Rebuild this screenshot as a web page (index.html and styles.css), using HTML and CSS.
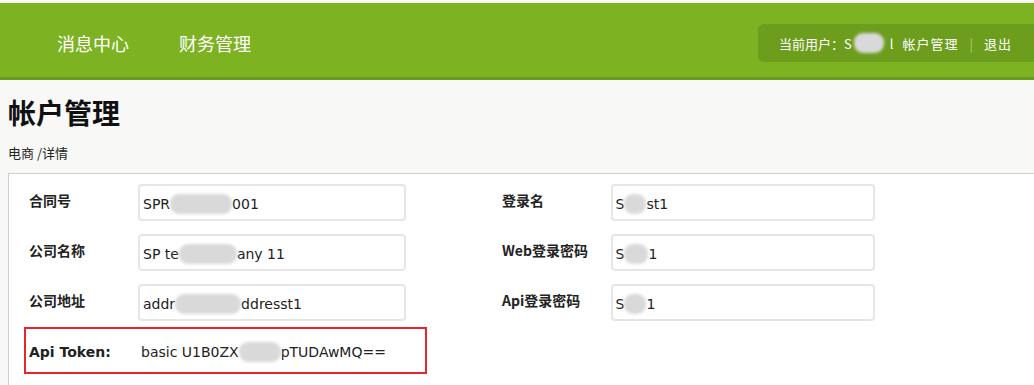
FILE: index.html
```html
<!DOCTYPE html>
<html lang="zh-CN">
<head>
<meta charset="utf-8">
<title>帐户管理</title>
<link rel="stylesheet" href="styles.css">
</head>
<body>
<header class="topbar">
  <nav class="nav">
    <a class="nav-item">消息中心</a>
    <a class="nav-item">财务管理</a>
  </nav>
  <div class="userbox">
    <span>当前用户：S</span><span class="blob blob-user"></span><span class="uname-end">l</span>
    <a class="ulink">帐户管理</a>
    <span class="sep">|</span>
    <a class="ulink">退出</a>
  </div>
</header>

<main class="main">
  <h1 class="title">帐户管理</h1>
  <div class="crumb">电商 /详情</div>

  <section class="panel">
    <div class="grid">
      <div class="field">
        <label class="label">合同号</label>
        <div class="input">SPR<span class="blob" style="width:62px"></span>001</div>
      </div>
      <div class="field">
        <label class="label">登录名</label>
        <div class="input">S<span class="blob" style="width:22px"></span>st1</div>
      </div>
      <div class="field">
        <label class="label">公司名称</label>
        <div class="input">SP te<span class="blob" style="width:58px"></span>any 11</div>
      </div>
      <div class="field">
        <label class="label">Web登录密码</label>
        <div class="input">S<span class="blob" style="width:24px"></span>1</div>
      </div>
      <div class="field">
        <label class="label">公司地址</label>
        <div class="input">addr<span class="blob" style="width:66px"></span>ddresst1</div>
      </div>
      <div class="field">
        <label class="label">Api登录密码</label>
        <div class="input">S<span class="blob" style="width:22px"></span>1</div>
      </div>
    </div>

    <div class="token">
      <span class="token-label">Api Token:</span>
      <span class="token-value">basic U1B0ZX<span class="blob" style="width:42px"></span>pTUDAwMQ==</span>
    </div>
  </section>
</main>
</body>
</html>
```

FILE: styles.css
```css
* { box-sizing: border-box; }

html, body {
  margin: 0;
  padding: 0;
}

body {
  background: #f8f8f6;
  font-family: "Noto Sans CJK SC", "DejaVu Sans", sans-serif;
  color: #222;
  overflow: hidden;
  padding-top: 3px;
}

.topbar {
  display: flex;
  align-items: flex-start;
  height: 77px;
  background: #7db322;
  border-bottom: 3px solid #6a9a1c;
}

.nav {
  display: flex;
  gap: 50px;
  padding-left: 57px;
  padding-top: 27px;
}

.nav-item {
  color: #fff;
  font-size: 18px;
  line-height: 26px;
}

.userbox {
  margin-left: auto;
  margin-top: 21px;
  height: 38px;
  width: 276px;
  display: flex;
  align-items: center;
  padding-left: 21px;
  background: #6d9d1c;
  border-radius: 6px 0 0 6px;
  color: #fff;
  font-size: 13px;
  white-space: nowrap;
}

.blob-user {
  width: 30px;
  height: 22px;
  background: #98c34e;
  margin-left: 2px;
}

.uname-end { margin-left: 6px; margin-right: 9px; }
.ulink { color: #fff; letter-spacing: 1px; }
.sep { color: #a9cf6a; margin: 0 11px; }

.main {
  padding: 0 0 0 8px;
  margin-right: -30px;
}

.title {
  margin: 12px 0 0;
  font-size: 28px;
  line-height: 40px;
  font-weight: 700;
  color: #111;
}

.crumb {
  margin-top: 11px;
  font-size: 13px;
  line-height: 20px;
  color: #222;
}

.panel {
  margin-top: 10px;
  background: #fff;
  border: 1px solid #cfcfcf;
  border-bottom: none;
  height: 212px;
  padding: 10px 0 0 15px;
}

.grid {
  display: grid;
  grid-template-columns: 382px 378px;
  column-gap: 91px;
  row-gap: 13px;
}

.field {
  display: flex;
  align-items: center;
  padding-left: 5px;
}

.label {
  width: 109px;
  font-size: 14px;
  font-weight: 700;
  color: #222;
  margin-top: -6px;
}

.grid .field:nth-child(even) .label { width: 110px; }

.input {
  width: 268px;
  height: 37px;
  border: 2px solid #e6e6e6;
  border-radius: 4px;
  background: #fff;
  display: flex;
  align-items: center;
  padding-left: 3px;
  padding-top: 2px;
  font-family: "DejaVu Sans", "Noto Sans CJK SC", sans-serif;
  font-size: 14px;
  color: #222;
  white-space: nowrap;
}

.blob {
  display: inline-block;
  height: 20px;
  background: #d9d9d9;
  border-radius: 9px;
  filter: blur(1.5px);
}

.token {
  margin-top: 6px;
  width: 403px;
  height: 47px;
  border: 2px solid #e8262a;
  display: flex;
  align-items: center;
  padding-left: 3px;
  padding-top: 2px;
  font-family: "DejaVu Sans", "Noto Sans CJK SC", sans-serif;
  font-size: 14px;
  color: #222;
  white-space: nowrap;
}

.token-label {
  width: 112px;
  font-weight: 700;
}

.token-value {
  display: flex;
  align-items: center;
}
```
